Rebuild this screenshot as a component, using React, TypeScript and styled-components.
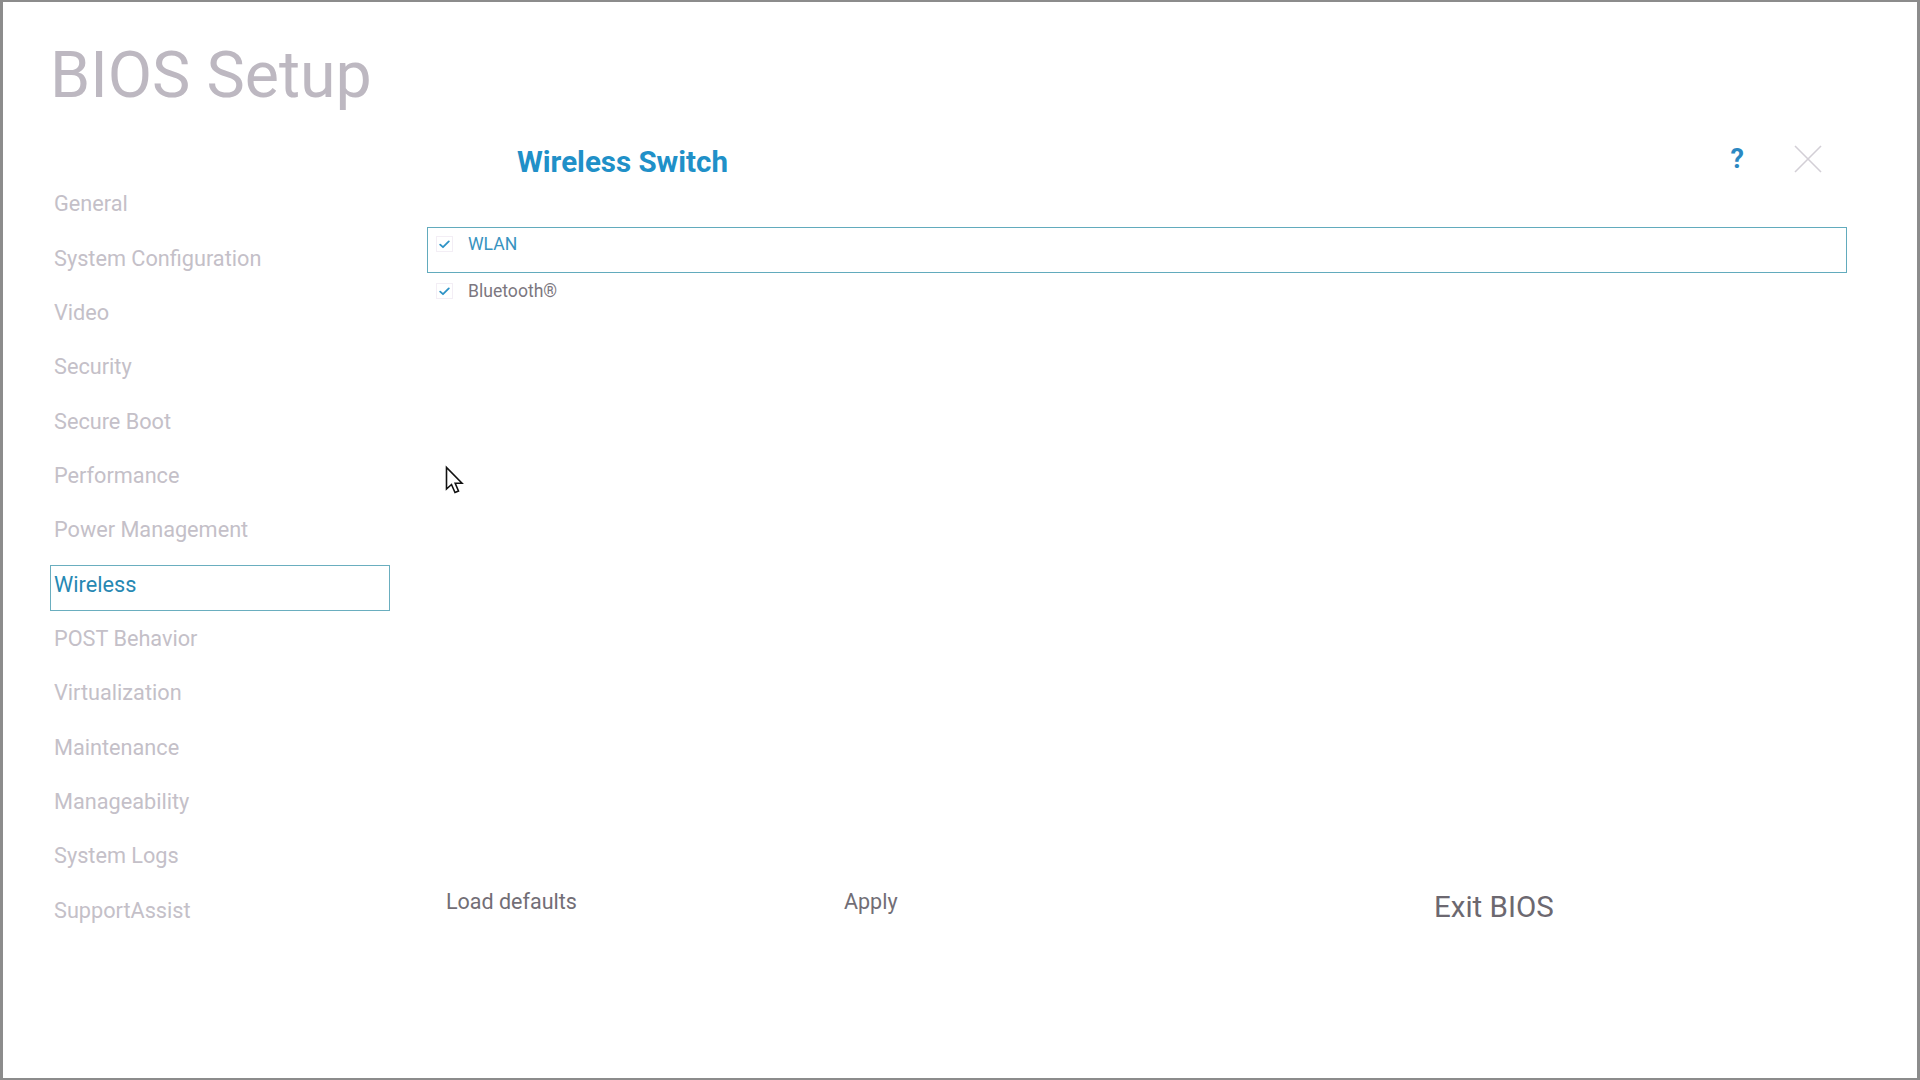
import React from "react";
import styled, { createGlobalStyle } from "styled-components";

const GlobalStyle = createGlobalStyle`
  html, body {
    margin: 0;
    padding: 0;
    background: #ffffff;
  }
  body {
    font-family: Roboto, "Noto Sans", "Liberation Sans", sans-serif;
  }
  * { box-sizing: border-box; }
`;

const Page = styled.div`
  position: relative;
  width: 1920px;
  height: 1080px;
  background: #ffffff;
  border-style: solid;
  border-color: #8c8c8c;
  border-width: 2px 3px 2px 3px;
  padding: 42px 70px 0 47px;
  display: flex;
  flex-direction: column;
  overflow: hidden;
`;

const Title = styled.h1`
  margin: 0;
  font-size: 64.5px;
  line-height: 63px;
  height: 63px;
  font-weight: 400;
  color: #bdb8c1;
  letter-spacing: 0;
`;

const Body = styled.div`
  margin-top: 23px;
  display: flex;
  gap: 37px;
  flex: 1;
`;

const Sidebar = styled.nav`
  width: 340px;
  padding-top: 54.3px;
  display: flex;
  flex-direction: column;
  gap: 8.35px;
`;

const NavItem = styled.div<{ $active?: boolean }>`
  height: 46px;
  border: 1px solid ${(p) => (p.$active ? "#6aaebf" : "transparent")};
  padding: 0 0 8px 3px;
  font-size: 21.7px;
  line-height: 38px;
  color: ${(p) => (p.$active ? "#2688b3" : "#c4c0c8")};
  white-space: nowrap;
`;

const Main = styled.section`
  width: 1420px;
  display: flex;
  flex-direction: column;
`;

const Header = styled.div`
  height: 64px;
  display: flex;
  align-items: center;
  padding-left: 90px;
  padding-right: 25px;
`;

const PanelTitle = styled.h2`
  margin: 0;
  font-size: 29.5px;
  line-height: 36px;
  font-weight: 700;
  color: #2090c8;
  flex: 1;
`;

const HelpButton = styled.span`
  font-size: 27px;
  line-height: 30px;
  font-weight: 700;
  color: #2b88c2;
  margin-right: 50px;
  margin-top: -6px;
`;

const CloseButton = styled.span`
  width: 28px;
  height: 28px;
  display: flex;
  margin-top: -6px;
`;

const OptionList = styled.div`
  margin-top: 33px;
  display: flex;
  flex-direction: column;
`;

const OptionRow = styled.div<{ $selected?: boolean }>`
  height: 46px;
  border: 1px solid ${(p) => (p.$selected ? "#62abbd" : "transparent")};
  padding: ${(p) => (p.$selected ? "4px" : "5px")} 0 0 8px;
  display: flex;
  align-items: flex-start;
  gap: 15px;
`;

const CheckBox = styled.span`
  width: 17px;
  height: 16px;
  margin-top: 4px;
  border: 1px solid #f3eef5;
  display: flex;
  align-items: center;
  justify-content: center;
`;

const OptionLabel = styled.span<{ $selected?: boolean }>`
  font-size: 17.6px;
  line-height: 24px;
  color: ${(p) => (p.$selected ? "#3893c0" : "#7c7780")};
`;

const Footer = styled.div`
  margin-top: 561px;
  display: grid;
  grid-template-columns: 398px 590px auto;
  padding-left: 19px;
  align-items: start;
`;

const FooterButton = styled.span`
  font-size: 21.5px;
  line-height: 44px;
  color: #726e76;
`;

const ExitButton = styled.span`
  font-size: 29.5px;
  line-height: 54px;
  color: #6c6870;
`;

const Cursor = styled.svg`
  position: absolute;
  left: 440px;
  top: 463px;
`;

const navItems = [
  "General",
  "System Configuration",
  "Video",
  "Security",
  "Secure Boot",
  "Performance",
  "Power Management",
  "Wireless",
  "POST Behavior",
  "Virtualization",
  "Maintenance",
  "Manageability",
  "System Logs",
  "SupportAssist",
];

const Check = () => (
  <svg width="11" height="9" viewBox="0 0 11 9">
    <polyline
      points="1.2,4.6 4,7.2 9.8,1.4"
      fill="none"
      stroke="#2e93c6"
      strokeWidth="1.8"
      strokeLinecap="round"
      strokeLinejoin="round"
    />
  </svg>
);

export default function App() {
  return (
    <>
      <GlobalStyle />
      <Page>
        <Title>BIOS Setup</Title>
        <Body>
          <Sidebar>
            {navItems.map((n) => (
              <NavItem key={n} $active={n === "Wireless"}>
                {n}
              </NavItem>
            ))}
          </Sidebar>
          <Main>
            <Header>
              <PanelTitle>Wireless Switch</PanelTitle>
              <HelpButton>?</HelpButton>
              <CloseButton>
                <svg width="28" height="28" viewBox="0 0 28 28">
                  <line x1="1" y1="1" x2="27" y2="27" stroke="#d3cfd6" strokeWidth="1.6" />
                  <line x1="27" y1="1" x2="1" y2="27" stroke="#d3cfd6" strokeWidth="1.6" />
                </svg>
              </CloseButton>
            </Header>
            <OptionList>
              <OptionRow $selected>
                <CheckBox>
                  <Check />
                </CheckBox>
                <OptionLabel $selected>WLAN</OptionLabel>
              </OptionRow>
              <OptionRow>
                <CheckBox>
                  <Check />
                </CheckBox>
                <OptionLabel>Bluetooth®</OptionLabel>
              </OptionRow>
            </OptionList>
            <Footer>
              <FooterButton>Load defaults</FooterButton>
              <FooterButton>Apply</FooterButton>
              <ExitButton>Exit BIOS</ExitButton>
            </Footer>
          </Main>
        </Body>
        <Cursor width="24" height="32" viewBox="0 0 24 32">
          <path
            d="M3.5 2.5 L3.5 24 L8.5 19.5 L12 27.5 L15.5 26 L12.2 18.3 L19 18.3 Z"
            fill="#ffffff"
            stroke="#111111"
            strokeWidth="1.6"
            strokeLinejoin="miter"
          />
        </Cursor>
      </Page>
    </>
  );
}
